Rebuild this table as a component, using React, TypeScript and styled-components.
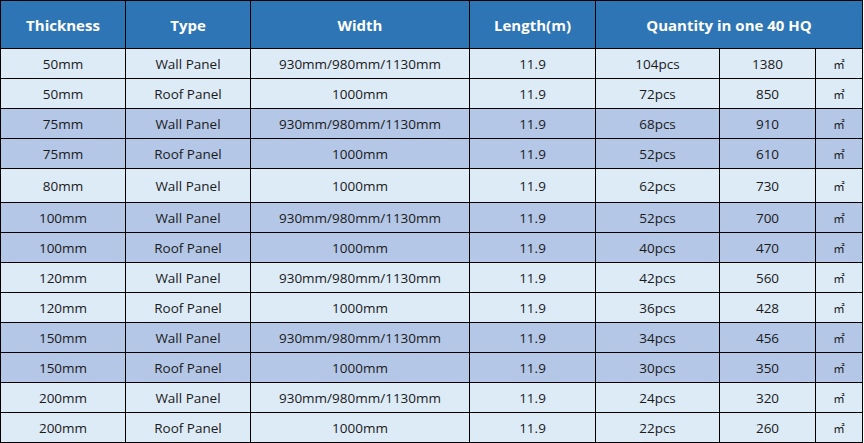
import styled, { createGlobalStyle } from "styled-components";

const GlobalStyle = createGlobalStyle`
  html, body {
    margin: 0;
    padding: 0;
    background: #ffffff;
  }
`;

const Table = styled.table`
  border-collapse: collapse;
  table-layout: fixed;
  width: 862px;
  font-family: "Open Sans", "Liberation Sans", sans-serif;
  font-size: 13.5px;
  color: #1a1a1a;
`;

const HeadCell = styled.th`
  height: 47px;
  background: #2e75b6;
  color: #ffffff;
  font-size: 15px;
  font-weight: 700;
  border: 1px solid #000000;
  text-align: center;
  vertical-align: middle;
  padding: 0;
`;

const Row = styled.tr<{ $dark: boolean; $tall?: boolean }>`
  height: ${(p) => (p.$tall ? 34 : 30)}px;
  background: ${(p) => (p.$dark ? "#b4c7e7" : "#ddebf7")};
`;

const Cell = styled.td`
  border: 1px solid #000000;
  text-align: center;
  vertical-align: middle;
  padding: 0;
  white-space: nowrap;
`;

const UnitCell = styled(Cell)`
  font-family: "Noto Sans CJK SC", sans-serif;
  font-size: 11.5px;
`;

const widths = [125, 125, 219, 126, 124, 96, 47];

const rows = [
  ["50mm", "Wall Panel", "930mm/980mm/1130mm", "104pcs", "1380"],
  ["50mm", "Roof Panel", "1000mm", "72pcs", "850"],
  ["75mm", "Wall Panel", "930mm/980mm/1130mm", "68pcs", "910"],
  ["75mm", "Roof Panel", "1000mm", "52pcs", "610"],
  ["80mm", "Wall Panel", "1000mm", "62pcs", "730"],
  ["100mm", "Wall Panel", "930mm/980mm/1130mm", "52pcs", "700"],
  ["100mm", "Roof Panel", "1000mm", "40pcs", "470"],
  ["120mm", "Wall Panel", "930mm/980mm/1130mm", "42pcs", "560"],
  ["120mm", "Roof Panel", "1000mm", "36pcs", "428"],
  ["150mm", "Wall Panel", "930mm/980mm/1130mm", "34pcs", "456"],
  ["150mm", "Roof Panel", "1000mm", "30pcs", "350"],
  ["200mm", "Wall Panel", "930mm/980mm/1130mm", "24pcs", "320"],
  ["200mm", "Roof Panel", "1000mm", "22pcs", "260"],
];

const darkRows = [2, 3, 5, 6, 9, 10];

const App = () => {
  return (
    <>
      <GlobalStyle />
      <Table>
        <colgroup>
          {widths.map((w, i) => (
            <col key={i} style={{ width: w }} />
          ))}
        </colgroup>
        <thead>
          <tr>
            <HeadCell>Thickness</HeadCell>
            <HeadCell>Type</HeadCell>
            <HeadCell>Width</HeadCell>
            <HeadCell>Length(m)</HeadCell>
            <HeadCell colSpan={3}>Quantity in one 40 HQ</HeadCell>
          </tr>
        </thead>
        <tbody>
          {rows.map((r, i) => (
            <Row key={i} $dark={darkRows.includes(i)} $tall={i === 4}>
              <Cell>{r[0]}</Cell>
              <Cell>{r[1]}</Cell>
              <Cell>{r[2]}</Cell>
              <Cell>11.9</Cell>
              <Cell>{r[3]}</Cell>
              <Cell>{r[4]}</Cell>
              <UnitCell>㎡</UnitCell>
            </Row>
          ))}
        </tbody>
      </Table>
    </>
  );
};

export default App;
